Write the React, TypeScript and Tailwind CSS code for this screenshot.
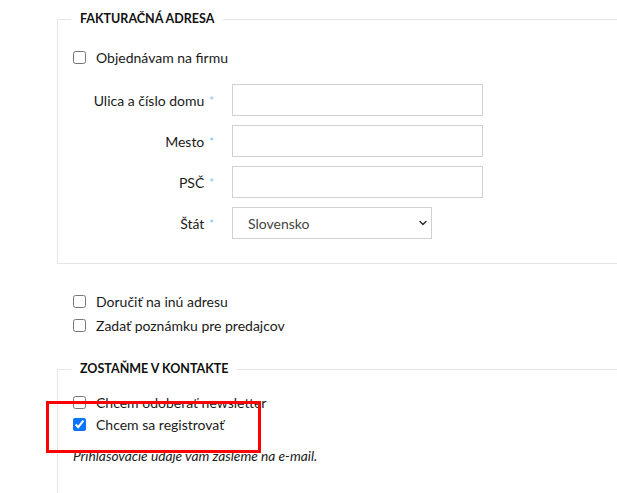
import React from 'react';
import { ChevronDown } from 'lucide-react';

const FONT = { fontFamily: 'Lato, "Noto Sans", sans-serif' };

const Req = () => <span className="relative top-[-1px] ml-[5px] text-[11px] text-[#7cc4f2]">*</span>;

const Check = ({ label, checked = false }: { label: string; checked?: boolean }) => (
  <label className="flex items-center h-[24px] gap-[10px] text-[14px] text-[#1a1a1a]">
    <input type="checkbox" defaultChecked={checked} className="w-[13px] h-[13px] m-0 accent-[#0a75ff]" />
    <span>{label}</span>
  </label>
);

const Field = ({ label, children }: { label: string; children: React.ReactNode }) => (
  <div className="flex items-center">
    <div className="w-[143px] text-right text-[14px] text-[#1a1a1a] pr-[2px]">
      {label}
      <Req />
    </div>
    <div className="ml-[16px]">{children}</div>
  </div>
);

export default function App() {
  return (
    <div className="relative w-[617px] h-[493px] overflow-hidden bg-white" style={FONT}>
      <div className="pl-[57px] pt-[10px]">
        {/* Billing address */}
        <fieldset className="w-[600px] border border-[#e6e6e6] pb-[24px]">
          <legend className="ml-[13px] px-[9px] text-[12.5px] font-bold text-[#111] uppercase leading-[18px]">
            Fakturačná adresa
          </legend>
          <div className="pl-[15px] pt-[17px]">
            <Check label="Objednávam na firmu" />
            <div className="flex flex-col gap-[9px] mt-[15px]">
              <Field label="Ulica a číslo domu">
                <input className="w-[251px] h-[32px] border border-[#d0d0d0] outline-none" />
              </Field>
              <Field label="Mesto">
                <input className="w-[251px] h-[32px] border border-[#d0d0d0] outline-none" />
              </Field>
              <Field label="PSČ">
                <input className="w-[251px] h-[32px] border border-[#d0d0d0] outline-none" />
              </Field>
              <Field label="Štát">
                <div className="relative w-[200px]">
                  <select className="appearance-none w-[200px] h-[32px] border border-[#d0d0d0] bg-white pl-[15px] text-[14px] text-[#444] outline-none">
                    <option>Slovensko</option>
                  </select>
                  <ChevronDown size={12} strokeWidth={3} className="absolute right-[3px] top-[10px] text-[#333] pointer-events-none" />
                </div>
              </Field>
            </div>
          </div>
        </fieldset>

        <div className="pl-[16px] pt-[25px]">
          <Check label="Doručiť na inú adresu" />
          <Check label="Zadať poznámku pre predajcov" />
        </div>

        {/* Stay in touch */}
        <fieldset className="w-[600px] h-[200px] border border-[#e6e6e6] mt-[23px]">
          <legend className="ml-[13px] px-[9px] text-[12.5px] font-bold text-[#111] uppercase leading-[18px]">
            Zostaňme v kontakte
          </legend>
          <div className="pl-[15px] pt-[13px]">
            <div className="flex flex-col">
              <div className="h-[22px] flex items-center">
                <Check label="Chcem odoberať newsletter" />
              </div>
              <div className="h-[22px] flex items-center">
                <Check label="Chcem sa registrovať" checked />
              </div>
            </div>
            <p className="mt-[11px] text-[13.75px] italic text-[#1a1a1a]">Prihlasovacie údaje vám zašleme na e-mail.</p>
          </div>
        </fieldset>
      </div>

      {/* annotation */}
      <div className="absolute left-[46px] top-[401px] w-[215px] h-[52px] border-[3px] border-[#ff0000]" />
    </div>
  );
}
